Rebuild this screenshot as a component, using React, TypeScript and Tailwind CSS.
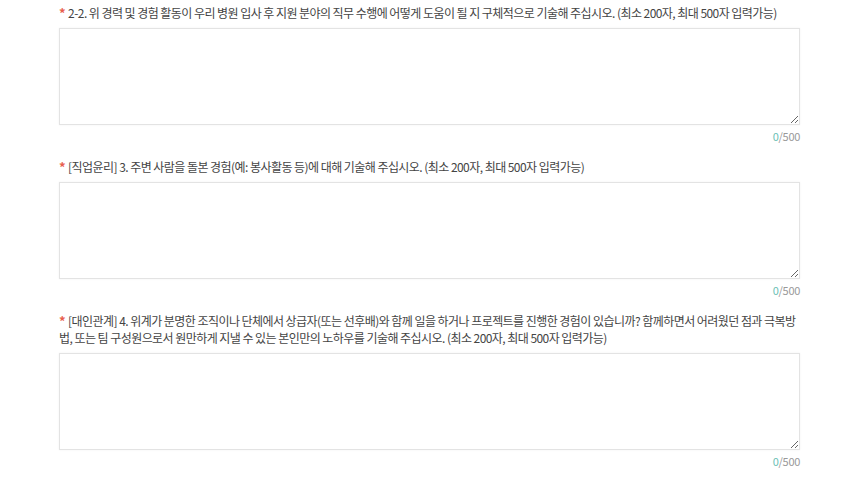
const questions = [
  {
    id: 'q22',
    lines: ['2-2. 위 경력 및 경험 활동이 우리 병원 입사 후 지원 분야의 직무 수행에 어떻게 도움이 될 지 구체적으로 기술해 주십시오. (최소 200자, 최대 500자 입력가능)'],
  },
  {
    id: 'q3',
    lines: ['[직업윤리] 3. 주변 사람을 돌본 경험(예: 봉사활동 등)에 대해 기술해 주십시오. (최소 200자, 최대 500자 입력가능)'],
  },
  {
    id: 'q4',
    lines: [
      '[대인관계] 4. 위계가 분명한 조직이나 단체에서 상급자(또는 선후배)와 함께 일을 하거나 프로젝트를 진행한 경험이 있습니까? 함께하면서 어려웠던 점과 극복방',
      '법, 또는 팀 구성원으로서 원만하게 지낼 수 있는 본인만의 노하우를 기술해 주십시오. (최소 200자, 최대 500자 입력가능)',
    ],
  },
];

export default function App() {
  return (
    <div className="min-h-screen bg-white font-['Noto_Sans_CJK_KR','Noto_Sans',sans-serif] text-[#444]">
      <div className="ml-[59px] w-[741px] pt-[4px]">
        {questions.map((q) => (
          <div key={q.id} className="mb-[13px]">
            <p className="text-[12px] leading-[17px] tracking-[-0.55px]">
              {q.lines.map((line, i) => (
                <span key={i} className="block whitespace-nowrap">
                  {i === 0 && <span className="mr-[3px] text-[13px] font-bold text-[#e8604c]">*</span>}
                  {line}
                </span>
              ))}
            </p>
            <textarea className="mt-[7px] block h-[97px] w-full resize-y border border-[#e3e3e3] bg-white shadow-[0_0_2px_rgba(0,0,0,0.06)] outline-none" />
            <div className="mt-[3px] text-right text-[11px] leading-[17px] tracking-[-0.3px] text-[#999]">
              <span className="text-[#6bbfb5]">0</span>/500
            </div>
          </div>
        ))}
      </div>
    </div>
  );
}
